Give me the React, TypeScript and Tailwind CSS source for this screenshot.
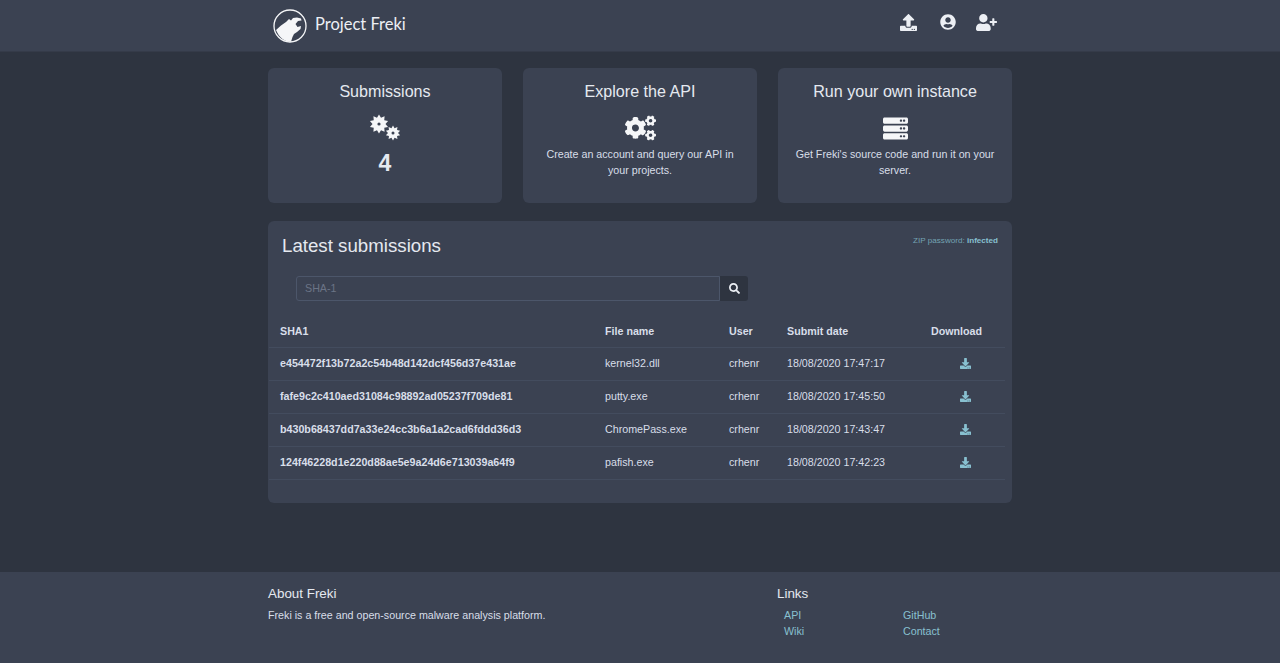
import React from "react";
import { FaUpload, FaUserCircle, FaUserPlus, FaCogs, FaServer, FaSearch, FaDownload } from "react-icons/fa";

const rows = [
  ["e454472f13b72a2c54b48d142dcf456d37e431ae", "kernel32.dll", "crhenr", "18/08/2020 17:47:17"],
  ["fafe9c2c410aed31084c98892ad05237f709de81", "putty.exe", "crhenr", "18/08/2020 17:45:50"],
  ["b430b68437dd7a33e24cc3b6a1a2cad6fddd36d3", "ChromePass.exe", "crhenr", "18/08/2020 17:43:47"],
  ["124f46228d1e220d88ae5e9a24d6e713039a64f9", "pafish.exe", "crhenr", "18/08/2020 17:42:23"],
];

function Wolf() {
  return (
    <svg viewBox="0 0 34 34" className="w-[34px] h-[34px]">
      <circle cx="17" cy="17" r="16" fill="none" stroke="#f5f6f8" strokeWidth="1.3" />
      <path
        d="M3 21 L8 16.5 L13 13 L16 10 L18 11.5 L20 9 L24 8.5 L28 9.5 L28.5 11.5 L25 12 L22.5 15 L24.5 18 L28 17 L27.5 20 L24 23 L21 25 L19.5 28 L18 32.8 C12 33 6 28.5 3 21 Z"
        fill="#f5f6f8"
      />
    </svg>
  );
}

function spiky(cx: number, cy: number, r1: number, r2: number, n: number) {
  const pts: string[] = [];
  for (let i = 0; i < n * 2; i++) {
    const a = (Math.PI * i) / n;
    const r = i % 2 === 0 ? r1 : r2;
    pts.push(`${(cx + r * Math.sin(a)).toFixed(2)},${(cy - r * Math.cos(a)).toFixed(2)}`);
  }
  return pts.join(" ");
}

function SpikyGears() {
  return (
    <svg viewBox="0 0 32 28" className="w-[32px] h-[28px]">
      <polygon points={spiky(10, 10, 9.5, 6.5, 10)} fill="#f5f6f8" />
      <circle cx="10" cy="10" r="1.6" fill="#3b4252" />
      <polygon points={spiky(24, 19, 7.5, 5, 10)} fill="#f5f6f8" />
      <circle cx="24" cy="19" r="1.5" fill="#3b4252" />
    </svg>
  );
}

function Card({ title, icon, children }: { title: string; icon: React.ReactNode; children: React.ReactNode }) {
  return (
    <div className="w-[234px] h-[135px] bg-[#3b4252] rounded-md pt-[11px] px-4 flex flex-col items-center text-center">
      <h2 className="text-[16.1px] leading-[25px] text-[#e5e9f0]">{title}</h2>
      <div className="mt-[10px] h-[28px] flex items-center justify-center text-[#f5f6f8]">{icon}</div>
      {children}
    </div>
  );
}

export default function App() {
  return (
    <div className="min-h-[663px] flex flex-col bg-[#2e3440] font-['Liberation_Sans',Arial,sans-serif] text-[#d8dee9]">
      <header className="h-[51px] bg-[#3b4252] shadow-[0_1px_0_#353b49]">
        <div className="w-[744px] mx-auto h-full flex items-center">
          <div className="ml-[5px] flex items-center">
            <Wolf />
            <span className="ml-[8px] mb-[3px] text-[16.5px] font-['Lato',sans-serif] text-[#eceff4]">Project Freki</span>
          </div>
          <div className="ml-auto mr-[15px] flex items-center text-[#eceff4] mb-[7px]">
            <FaUpload className="w-[17px] h-[17px]" />
            <FaUserCircle className="ml-[23px] w-[16px] h-[16px]" />
            <FaUserPlus className="ml-[20px] w-[21px] h-[17px]" />
          </div>
        </div>
      </header>

      <main className="w-[744px] mx-auto pt-[17px]">
        <div className="flex justify-between">
          <Card title="Submissions" icon={<SpikyGears />}>
            <div className="mt-[7px] text-[23px] leading-[28px] font-bold text-[#e5e9f0]">4</div>
          </Card>
          <Card title="Explore the API" icon={<FaCogs className="w-[31px] h-[26px]" />}>
            <p className="mt-[4px] text-[10.7px] leading-[16px] text-[#d8dee9]">Create an account and query our API in your projects.</p>
          </Card>
          <Card title="Run your own instance" icon={<FaServer className="w-[25px] h-[25px]" />}>
            <p className="mt-[4px] text-[10.7px] leading-[16px] text-[#d8dee9]">Get Freki's source code and run it on your server.</p>
          </Card>
        </div>

        <section className="relative mt-[18px] h-[282px] bg-[#3b4252] rounded-md">
          <h2 className="absolute left-[14px] top-[13px] text-[18.7px] leading-[24px] text-[#e5e9f0]">Latest submissions</h2>
          <div className="absolute right-[14px] top-[14px] text-[8.1px] leading-[12px] text-[#74a3b3]">
            ZIP password: <b className="text-[#88c0d0]">infected</b>
          </div>
          <div className="pt-[55px] pl-[28px] flex">
            <div className="w-[424px] h-[25px] border border-[#4c566a] rounded-l-[3px] pl-[8px] text-[10.7px] leading-[23px] text-[#6b7486]">SHA-1</div>
            <div className="w-[28px] h-[25px] bg-[#2e3440] rounded-r-[3px] flex items-center justify-center text-[#eceff4]">
              <FaSearch className="w-[11px] h-[11px]" />
            </div>
          </div>
          <table className="mt-[15px] ml-[1px] w-[736px] table-fixed text-[10.7px]">
            <colgroup>
              <col className="w-[336px]" />
              <col className="w-[124px]" />
              <col className="w-[58px]" />
              <col className="w-[135px]" />
              <col />
            </colgroup>
            <thead>
              <tr className="h-[31px] border-b border-[#434c5e] text-left font-bold">
                <th className="pl-[11px]">SHA1</th>
                <th>File name</th>
                <th>User</th>
                <th>Submit date</th>
                <th className="pl-[9px]">Download</th>
              </tr>
            </thead>
            <tbody>
              {rows.map((r) => (
                <tr key={r[0]} className="h-[33px] border-b border-[#434c5e]">
                  <td className="pl-[11px] font-bold whitespace-nowrap">{r[0]}</td>
                  <td>{r[1]}</td>
                  <td>{r[2]}</td>
                  <td className="whitespace-nowrap">{r[3]}</td>
                  <td>
                    <FaDownload className="ml-[38px] w-[11px] h-[11px] text-[#88c0d0]" />
                  </td>
                </tr>
              ))}
            </tbody>
          </table>
        </section>
      </main>

      <footer className="mt-auto h-[91px] bg-[#3b4252]">
        <div className="w-[744px] mx-auto flex pt-[14px]">
          <div className="w-[509px]">
            <h3 className="text-[13.4px] leading-[16px] text-[#e5e9f0]">About Freki</h3>
            <p className="mt-[5px] text-[10.7px] leading-[16px] text-[#d8dee9]">Freki is a free and open-source malware analysis platform.</p>
          </div>
          <div>
            <h3 className="text-[13.4px] leading-[16px] text-[#e5e9f0]">Links</h3>
            <div className="mt-[5px] ml-[7px] grid grid-cols-[119px_auto] text-[10.7px] leading-[16px] text-[#88c0d0]">
              <span>API</span><span>GitHub</span><span>Wiki</span><span>Contact</span>
            </div>
          </div>
        </div>
      </footer>
    </div>
  );
}
